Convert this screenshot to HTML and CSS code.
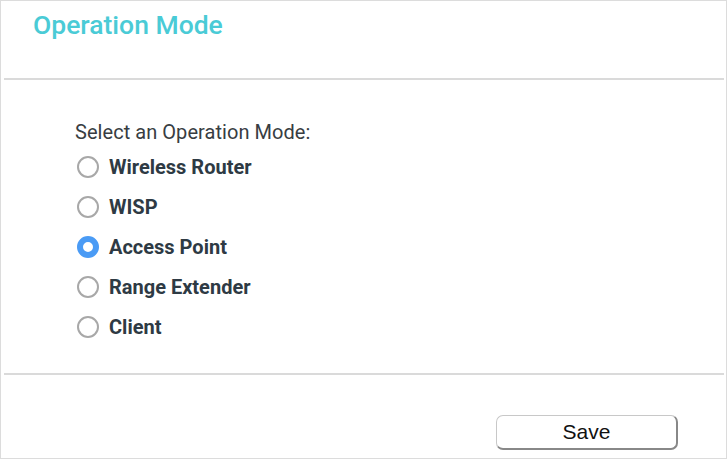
FILE: index.html
```html
<!DOCTYPE html>
<html>
<head>
<meta charset="utf-8">
<link rel="stylesheet" href="styles.css">
</head>
<body>
<div class="frame">
  <header class="head">
    <h1 class="title">Operation Mode</h1>
  </header>
  <hr class="sep">
  <section class="content">
    <p class="label">Select an Operation Mode:</p>
    <ul class="options">
      <li class="opt"><span class="radio"></span><span class="txt">Wireless Router</span></li>
      <li class="opt"><span class="radio"></span><span class="txt">WISP</span></li>
      <li class="opt"><span class="radio checked"></span><span class="txt">Access Point</span></li>
      <li class="opt"><span class="radio"></span><span class="txt">Range Extender</span></li>
      <li class="opt"><span class="radio"></span><span class="txt">Client</span></li>
    </ul>
  </section>
  <hr class="sep">
  <footer class="foot">
    <button class="save">Save</button>
  </footer>
</div>
</body>
</html>
```
FILE: styles.css
```css
html, body { margin: 0; padding: 0; background: #fff; }
body { width: 728px; height: 460px; overflow: hidden; font-family: Roboto, "Noto Sans", sans-serif; }
.frame {
  box-sizing: border-box;
  width: 727px;
  height: 459px;
  border: 1px solid #dcdcdc;
  display: flex;
  flex-direction: column;
}
.head { height: 77px; padding: 0 0 0 32px; }
.title {
  margin: 0;
  padding-top: 8px;
  font-size: 26.5px;
  font-weight: 500;
  color: #4acbd6;
  line-height: 32px;
}
.sep {
  margin: 0 2px 0 3px;
  border: 0;
  height: 2px;
  background: #dadada;
}
.content { height: 293px; padding: 0 0 0 74px; box-sizing: border-box; }
.label {
  margin: 40px 0 0 0;
  font-size: 20px;
  letter-spacing: 0.05px;
  color: #383d42;
  line-height: 24px;
}
.options { list-style: none; margin: 3px 0 0 0; padding: 0; }
.opt { display: flex; align-items: center; height: 40px; gap: 10px; }
.radio {
  box-sizing: border-box;
  width: 22px; height: 22px;
  border: 2px solid #a8a8a8;
  border-radius: 50%;
  margin-left: 2px;
}
.radio.checked { border: 6px solid #4a9bf5; background: #fff; }
.txt { font-size: 20px; font-weight: 700; color: #2e3a44; }
.foot { flex: 1; display: flex; justify-content: flex-end; align-items: flex-start; padding: 40px 48px 0 0; }
.save {
  width: 182px; height: 35px;
  background: #fff;
  border: 1px solid #c8c8c8;
  border-right: 2px solid #888;
  border-bottom: 2px solid #888;
  border-radius: 7px;
  font-family: "Liberation Sans", Arial, sans-serif;
  font-size: 21px;
  color: #111;
  padding: 0;
}
```
